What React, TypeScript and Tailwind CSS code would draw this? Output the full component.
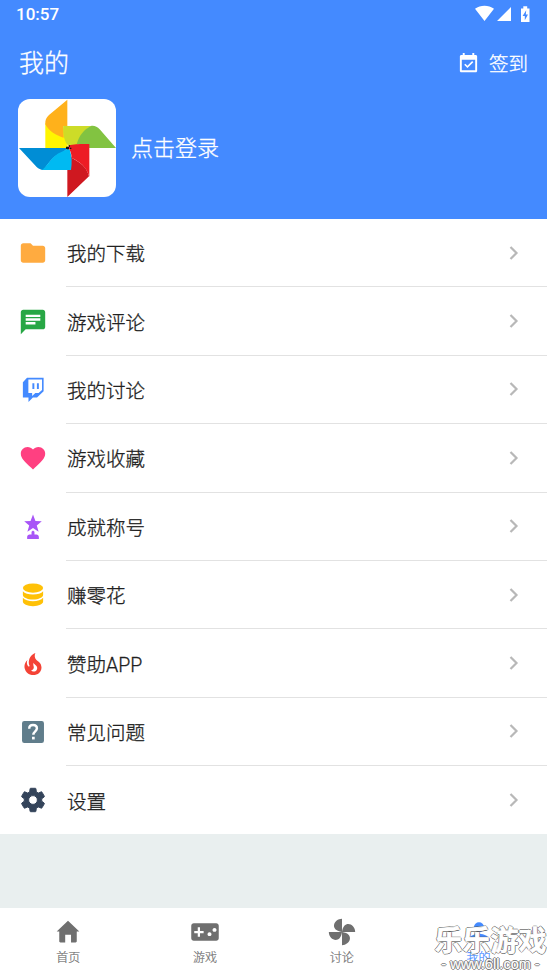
import type { ReactNode } from "react";

function Icon({ size = 30, children, box = "0 0 24 24" }: { size?: number; children: ReactNode; box?: string }) {
  return (
    <svg width={size} height={size} viewBox={box} fill="currentColor" className="block shrink-0">
      {children}
    </svg>
  );
}

const rows: { label: string; color: string; icon: ReactNode }[] = [
  {
    label: "我的下载",
    color: "text-[#ffab40]",
    icon: <path d="M10 4H4c-1.1 0-2 .9-2 2v12c0 1.1.9 2 2 2h16c1.1 0 2-.9 2-2V8c0-1.1-.9-2-2-2h-8z" />,
  },
  {
    label: "游戏评论",
    color: "text-[#28a745]",
    icon: <path d="M20 2H4c-1.1 0-2 .9-2 2v18l4-4h14c1.1 0 2-.9 2-2V4c0-1.1-.9-2-2-2zM6 9h12v2H6V9zm8 5H6v-2h8v2zm4-6H6V6h12v2z" />,
  },
  {
    label: "我的讨论",
    color: "text-[#448aff]",
    icon: (
      <path
        fillRule="evenodd"
        d="M7.1 2H20.7V13L15.3 18.200H11.9L8.3 21.8V18.200H3.7V5.6zM8.2 3.4V14.4H11.3V17L13.9 14.4H16.6L19.4 12V3.4zM11.5 6.4H13.1V11.2H11.5zM15.2 6.4H16.8V11.2H15.2z"
      />
    ),
  },
  {
    label: "游戏收藏",
    color: "text-[#ff4081]",
    icon: (
      <path d="M12 21.35l-1.45-1.32C5.4 15.36 2 12.28 2 8.5 2 5.42 4.42 3 7.5 3c1.74 0 3.41.81 4.5 2.09C13.09 3.81 14.76 3 16.5 3 19.58 3 22 5.42 22 8.5c0 3.78-3.4 6.86-8.55 11.54z" />
    ),
  },
  {
    label: "成就称号",
    color: "text-[#a855f7]",
    icon: (
      <path d="M12 1.8l2 5.300 5.200.1-4.100 3.500 1.500 5.100L12 12.900l-4.600 2.900 1.500-5.100-4.100-3.500 5.200-.1zM12 14.900l1.200.9v2.400h1.600c1.100 0 2 .8 2 2v1.600H7.200v-1.600c0-1.200.9-2 2-2h1.600v-2.400z" />
    ),
  },
  {
    label: "赚零花",
    color: "text-[#ffc107]",
    icon: (
      <>
        <ellipse cx="12" cy="6.300" rx="8.300" ry="3.800" />
        <path d="M3.700 8.900c1.400 1.700 4.600 2.700 8.300 2.700s6.900-1 8.300-2.700v3c0 1.900-3.600 3.700-8.300 3.700s-8.300-1.800-8.300-3.700z" />
        <path d="M3.700 14.300c1.400 1.700 4.600 2.800 8.300 2.800s6.900-1.100 8.300-2.800v3.100c0 2-3.600 3.800-8.300 3.800s-8.300-1.800-8.300-3.800z" />
      </>
    ),
  },
  {
    label: "赞助APP",
    color: "text-[#f44336]",
    icon: (
      <path d="M17.66 11.2C17.43 10.9 17.15 10.64 16.89 10.38C16.22 9.78 15.46 9.35 14.82 8.72C13.33 7.26 13 4.85 13.95 3C13 3.23 12.17 3.75 11.46 4.32C8.87 6.4 7.85 10.07 9.07 13.22C9.11 13.32 9.15 13.42 9.15 13.55C9.15 13.77 9 13.97 8.8 14.05C8.57 14.15 8.33 14.09 8.14 13.93C8.08 13.88 8.04 13.83 8 13.76C6.87 12.33 6.69 10.28 7.45 8.64C5.78 10 4.87 12.3 5 14.47C5.06 14.97 5.12 15.47 5.29 15.97C5.43 16.57 5.7 17.17 6 17.7C7.08 19.43 8.95 20.67 10.96 20.92C13.1 21.19 15.39 20.8 17.03 19.32C18.86 17.66 19.5 15 18.56 12.72L18.43 12.46C18.22 12 17.66 11.2 17.66 11.2M14.5 17.5C14.22 17.74 13.76 18 13.4 18.1C12.28 18.5 11.16 17.94 10.5 17.28C11.69 17 12.4 16.12 12.61 15.23C12.78 14.43 12.46 13.77 12.33 13C12.21 12.26 12.23 11.63 12.5 10.94C12.69 11.32 12.89 11.7 13.13 12C13.9 13 15.11 13.44 15.37 14.8C15.41 14.94 15.43 15.08 15.43 15.23C15.46 16.05 15.1 16.95 14.5 17.5Z" />
    ),
  },
  {
    label: "常见问题",
    color: "text-[#607d8b]",
    icon: (
      <>
        <rect x="3" y="3" width="18" height="18" rx="1.900" />
        <path d="M8.900 9.300C8.900 7.300 10.200 6.300 12 6.300s3.200 1.100 3.200 2.800c0 2.200-2.900 2.500-2.900 5.100" fill="none" stroke="white" strokeWidth="2" />
        <rect x="11.200" y="15.900" width="2.200" height="2.200" fill="white" />
      </>
    ),
  },
  {
    label: "设置",
    color: "text-[#34445a]",
    icon: (
      <path d="M19.140 12.940c.04-.3.06-.61.06-.94 0-.32-.02-.64-.07-.94l2.030-1.580c.18-.14.23-.41.12-.61l-1.920-3.320c-.12-.22-.37-.29-.59-.22l-2.390.96c-.5-.38-1.030-.7-1.620-.94l-.36-2.540c-.04-.24-.24-.41-.48-.41h-3.840c-.24 0-.43.17-.47.41l-.36 2.540c-.59.24-1.130.57-1.620.94l-2.390-.96c-.22-.08-.47 0-.59.22L2.740 8.870c-.12.21-.08.47.12.61l2.030 1.580c-.05.3-.09.63-.09.94s.02.64.07.94l-2.030 1.580c-.18.14-.23.41-.12.61l1.920 3.320c.12.22.37.29.59.22l2.390-.96c.5.38 1.030.7 1.620.94l.36 2.540c.05.24.24.41.48.41h3.840c.24 0 .44-.17.47-.41l.36-2.540c.59-.24 1.130-.56 1.620-.94l2.390.96c.22.08.47 0 .59-.22l1.920-3.320c.12-.22.07-.47-.12-.61zM12 15.600c-1.980 0-3.600-1.620-3.600-3.600s1.620-3.600 3.600-3.600 3.600 1.620 3.600 3.600-1.620 3.600-3.600 3.600z" stroke="currentColor" strokeWidth=".8" />
    ),
  },
];

function Pinwheel() {
  return (
    <svg viewBox="24 27 294 294" className="block h-[98px] w-[98px] rounded-[12px] bg-white">
      <path d="M106 100L160 109 174 172C160 184 132 187 106 186z" fill="#fff500" />
      <path d="M172 29V109H160L161 143C138 136 117 124 106 103V95C107 86 111 81 117 75z" fill="#ffb11b" />
      <path d="M160 108H246C223 119 209 139 202 165L176 168C164 158 158 134 160 108z" fill="#cddc28" />
      <path d="M243 108C253 106 262 111 269 118L318 174H237V163H200C207 137 222 118 243 108z" fill="#82c341" />
      <path d="M27 174H173L157 189C125 196 113 229 99 240C92 240 86 236 80 231z" fill="#008dd5" />
      <path d="M174 180L186 204C211 219 230 229 237 259L172 321V238z" fill="#cf1820" />
      <path d="M96 240C113 228 126 196 154 186L174 176 180 181C186 199 186 220 183 240z" fill="#00baf2" />
      <path d="M176 166C195 162 216 161 238 162V260C229 230 208 214 185 204C184 190 181 180 175 175z" fill="#ed1c24" />
      <path d="M168 170h9v8h-9zM177 166h3v4h-3zM180 173h4v4h-4z" fill="#111" />
    </svg>
  );
}

const tabs: { label: string; icon: ReactNode }[] = [
  {
    label: "首页",
    icon: <Icon size={28}><path d="M12 2.300L21.700 11.500H19.500V20c0 .6-.4 1-1 1h-3.900v-6.600H9.600V21H5.500c-.6 0-1-.4-1-1v-8.500H2.300z" /></Icon>,
  },
  {
    label: "游戏",
    icon: (
      <Icon size={30}>
        <path fillRule="evenodd" d="M3 5h18c1.100 0 2 .9 2 2v10c0 1.100-.9 2-2 2H3c-1.100 0-2-.9-2-2V7c0-1.100.9-2 2-2zM6.200 8.200v2.900H3.400v1.800h2.800v2.900H8v-2.900h2.900v-1.800H8V8.200zM15.600 12.100a1.600 1.600 0 1 0 .01 0zM19.600 8.700a1.600 1.600 0 1 0 .01 0z" />
      </Icon>
    ),
  },
  {
    label: "讨论",
    icon: (
      <Icon size={28}>
        <path d="M12 .7V12C1 10.500 5 .700 12 .700zM23.300 12H12C13.500 1 23.300 5 23.300 12zM12 23.300V12C23 13.500 19 23.300 12 23.300zM.7 12H12C10.500 23 .700 19 .700 12z" />
      </Icon>
    ),
  },
  {
    label: "我的",
    icon: <Icon size={28}><circle cx="12" cy="8" r="4.300" /><path d="M2.500 20c0-4 5-6.500 9.500-6.500s9.500 2.500 9.500 6.500z" /></Icon>,
  },
];

export default function App() {
  return (
    <div className="relative flex h-[973px] w-[547px] flex-col overflow-hidden bg-[#e9efef] font-[Roboto,'Noto_Sans_CJK_SC',sans-serif] text-[#212121]">
      <header className="h-[219px] bg-[#448aff] text-white">
        <div className="flex h-7 items-center justify-between pl-4 pr-[15px]">
          <span className="text-[17px] font-medium leading-7">10:57</span>
          <svg width="58" height="18" viewBox="0 0 58 18" fill="currentColor">
            <path d="M1 3.700C6.500-.3 14.500-.3 20 3.700L10.500 16zM37 2v14H23zM47 3.500h2.300V1.200h3.900v2.300h2.300V17H47z" />
            <path d="M52.200 5.300l-3.600 5.800h2.200v4.200l3.200-5.700h-2.200z" fill="#448aff" />
          </svg>
        </div>
        <div className="flex h-[71px] items-center justify-between pl-[19px] pr-[19px]">
          <h1 className="pt-px text-[25px] font-light leading-9 [-webkit-text-stroke:0.300px_currentColor]">我的</h1>
          <div className="flex items-center gap-[9px]">
            <Icon size={23}>
              <path fillRule="evenodd" d="M6 1h2v2h8V1h2v2h1.500c.8 0 1.500.7 1.500 1.500v15.200c0 .7-.6 1.300-1.300 1.300H4.300c-.7 0-1.300-.6-1.300-1.300V4.500C3 3.700 3.700 3 4.500 3H6zM5 8v11h14V8zM15.800 9.500l1.200 1.200-6.100 6.100-3.400-3.400 1.200-1.200 2.200 2.200z" />
            </Icon>
            <span className="pt-[3px] text-[19.500px] font-light leading-7 [-webkit-text-stroke:0.300px_currentColor]">签到</span>
          </div>
        </div>
        <div className="flex items-center gap-[15px] pl-[18px]">
          <Pinwheel />
          <span className="pt-0.5 text-[22px] font-light leading-8 [-webkit-text-stroke:0.300px_currentColor]">点击登录</span>
        </div>
      </header>
      <main className="h-[615px] bg-white">
        {rows.map((row, i) => (
          <div key={row.label} className="flex h-[68.400px]">
            <div className={`flex w-[66px] items-center justify-center ${row.color}`}>
              <Icon box="-0.300 -0.300 24.600 24.600">{row.icon}</Icon>
            </div>
            <div className={`flex flex-1 items-center justify-between pl-px pr-[27px] ${i < rows.length - 1 ? "border-b border-[#e2e2e2]" : ""}`}>
              <span className="pt-[5px] text-[19.500px] font-light leading-8 [-webkit-text-stroke:0.300px_currentColor]">{row.label}</span>
              <svg width="12" height="16" viewBox="0 0 12 16" fill="none" stroke="#b8b8b8" strokeWidth="2.200">
                <path d="M2.500 2l6 6-6 6" />
              </svg>
            </div>
          </div>
        ))}
      </main>
      <nav className="mt-auto grid h-[65px] grid-cols-4 bg-white text-[#6f6f6f]">
        {tabs.map((tab, i) => (
          <div key={tab.label} className={`flex flex-col items-center pt-[9px] ${i === 3 ? "text-[#448aff]" : ""}`}>
            <div className="flex h-[30px] items-center">{tab.icon}</div>
            <span className="pt-0.5 text-[12px] font-light leading-[18px] [-webkit-text-stroke:0.200px_currentColor]">{tab.label}</span>
          </div>
        ))}
      </nav>
      <div className="absolute bottom-0 right-0 flex h-[50px] w-[113px] flex-col items-center whitespace-nowrap text-white">
        <span className="pt-0.5 text-[28px] font-bold leading-[34px] [-webkit-text-stroke:0.700px_white] [text-shadow:1px_0_#555,-1px_0_#555,0_1px_#555,0_-1px_#555]">乐乐游戏</span>
        <span className="font-['Liberation_Sans',sans-serif] text-[14.500px] leading-[11px] [-webkit-text-stroke:0.300px_white] [text-shadow:1px_0_#666,-1px_0_#666,0_1px_#666,0_-1px_#666]">- www.6ll.com -</span>
      </div>
    </div>
  );
}
